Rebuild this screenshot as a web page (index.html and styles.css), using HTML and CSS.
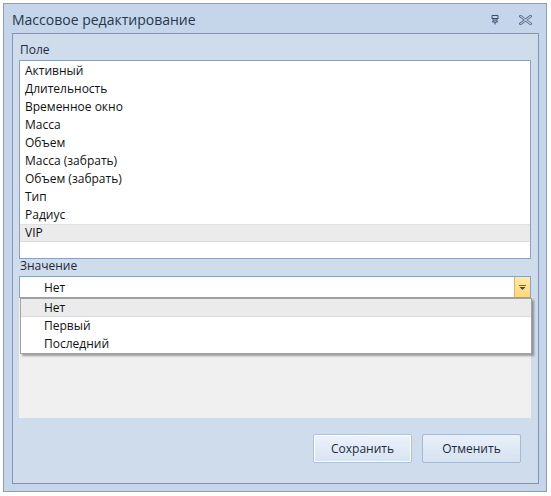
FILE: index.html
```html
<!DOCTYPE html>
<html>
<head>
<meta charset="utf-8">
<link rel="stylesheet" href="styles.css">
</head>
<body>
<div class="window">
  <div class="titlebar">
    <span class="title">Массовое редактирование</span>
    <div class="tb-icons">
      <svg class="pin" width="10" height="11" viewBox="0 0 10 11">
        <path d="M2 1.5 H8 V4.5 L6.5 6 H3.5 L2 4.5 Z M2 4.5 H8 M3.5 6 L2.5 8 H7.5 L6.5 6 M5 8 V10.5" fill="none" stroke="#3b4f6e" stroke-width="1"/>
      </svg>
      <svg class="close" width="13" height="10" viewBox="0 0 13 10">
        <path d="M1.5 1.2 L11.5 8.8 M11.5 1.2 L1.5 8.8" stroke="#4a5d7a" stroke-width="2.6" fill="none" stroke-linecap="square"/>
        <path d="M1.5 1.2 L11.5 8.8 M11.5 1.2 L1.5 8.8" stroke="#c6d6ea" stroke-width="1.1" fill="none" stroke-linecap="square"/>
      </svg>
    </div>
  </div>
  <div class="client">
    <div class="label">Поле</div>
    <div class="listbox">
      <div class="item">Активный</div>
      <div class="item">Длительность</div>
      <div class="item">Временное окно</div>
      <div class="item">Масса</div>
      <div class="item">Объем</div>
      <div class="item">Масса (забрать)</div>
      <div class="item">Объем (забрать)</div>
      <div class="item">Тип</div>
      <div class="item">Радиус</div>
      <div class="item selected">VIP</div>
    </div>
    <div class="label label2">Значение</div>
    <div class="combo-wrap">
      <div class="combo">
        <span class="combo-text">Нет</span>
        <div class="combo-btn">
          <svg width="7" height="5" viewBox="0 0 7 5"><path d="M0 0.5 H7" stroke="#5a6780" stroke-width="1"/><path d="M0.5 2 H6.5 L3.5 5 Z" fill="#3c4a66"/></svg>
        </div>
      </div>
      <div class="grey-panel"></div>
      <div class="popup">
        <div class="pitem phl">Нет</div>
        <div class="pitem">Первый</div>
        <div class="pitem">Последний</div>
      </div>
    </div>
    <div class="buttons">
      <div class="btn btn-default">Сохранить</div>
      <div class="btn">Отменить</div>
    </div>
  </div>
</div>
</body>
</html>
```
FILE: styles.css
```css
* { box-sizing: border-box; }
html, body { margin: 0; padding: 0; background: #ffffff; }
body {
  font-family: "Open Sans", "Noto Sans", sans-serif;
  font-size: 12px;
  color: #1e1e1e;
  padding: 3px 0 0 3px;
}
.window {
  width: 544px;
  height: 489px;
  border: 1px solid #8c9db5;
  background: #c5d6ea;
  padding: 0 7px 7px 8px;
  display: flex;
  flex-direction: column;
}
.titlebar {
  height: 29px;
  display: flex;
  align-items: center;
  justify-content: space-between;
  padding-top: 2px;
}
.title {
  font-size: 14px;
  color: #27364c;
}
.tb-icons {
  display: flex;
  align-items: center;
  gap: 19px;
  padding-right: 7px;
}
.client {
  flex: 1;
  border: 1px solid #7f97b6;
  background: #cfdcec;
  padding: 0 7px 0 6px;
  display: flex;
  flex-direction: column;
}
.label {
  height: 26px;
  line-height: 16px;
  padding: 8px 0 0 1px;
  color: #1e2a3c;
}
.label2 {
  height: 17px;
  padding-top: 0;
  line-height: 13px;
}
.listbox {
  height: 199px;
  border: 1px solid #8ca1be;
  background: #ffffff;
  padding-top: 1px;
}
.item {
  height: 18px;
  line-height: 18px;
  padding-left: 5px;
  color: #111;
}
.item.selected {
  background: #ebebeb;
  border-top: 1px solid #e2e2e2;
  border-bottom: 1px solid #dcdcdc;
  line-height: 16px;
}
.combo-wrap {
  position: relative;
}
.combo {
  height: 22px;
  border: 1px solid #8ca1be;
  background: #ffffff;
  display: flex;
  align-items: center;
  justify-content: space-between;
}
.combo-text {
  padding-left: 24px;
  color: #111;
}
.combo-btn {
  width: 16px;
  height: 20px;
  background: linear-gradient(#ffeaa8, #ffd97a);
  border-left: 1px solid #e3b25a;
  display: flex;
  align-items: center;
  justify-content: center;
}
.grey-panel {
  height: 120px;
  background: #f0f0f0;
}
.popup {
  position: absolute;
  left: 1px;
  top: 22px;
  width: 512px;
  height: 56px;
  background: #ffffff;
  border: 1px solid #a3a3a3;
  box-shadow: 2px 2px 2px rgba(0,0,0,0.35);
}
.pitem {
  height: 18px;
  line-height: 18px;
  padding-left: 23px;
  color: #111;
}
.pitem.phl {
  background: #ebebeb;
  border-bottom: 1px solid #dadada;
  line-height: 17px;
}
.buttons {
  display: flex;
  justify-content: flex-end;
  gap: 10px;
  padding: 16px 10px 0 0;
}
.btn {
  width: 99px;
  height: 29px;
  border: 1px solid #a7b9d0;
  border-radius: 2px;
  background: linear-gradient(#e8f0fa, #d6e2f1);
  display: flex;
  align-items: center;
  justify-content: center;
  color: #1e2a3c;
}
.btn-default {
  border: 1px solid #b0c0d6;
  box-shadow: inset 0 0 0 1px #ffffff;
  background: linear-gradient(#ebf2fb, #d8e4f2);
}
```
